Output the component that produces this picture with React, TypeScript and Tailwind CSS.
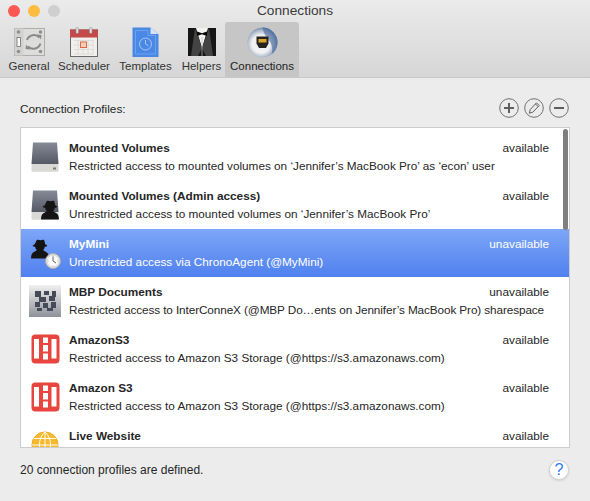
const font = "font-['Liberation_Sans',Arial,sans-serif]";

function GeneralIcon() {
  return (
    <svg width="31" height="28" viewBox="0 0 31 28">
      <rect x="0.500" y="0.500" width="30" height="27" fill="#dddddb" stroke="#adadab" />
      <rect x="0.500" y="0.500" width="9" height="27" fill="#d2d2d0" />
      <circle cx="4.500" cy="4" r="1.800" fill="#8f8f8f" />
      <circle cx="26.500" cy="4" r="1.800" fill="#8f8f8f" />
      <circle cx="4.500" cy="23.500" r="1.800" fill="#8f8f8f" />
      <circle cx="26.500" cy="23.500" r="1.800" fill="#8f8f8f" />
      <rect x="3" y="9.500" width="3.500" height="9" fill="#fbfbfb" stroke="#6f6f6f" strokeWidth="0.800" />
      <path d="M13 12a7.500 7.500 0 0 1 12.500-2.500M26.500 15.500a7.500 7.500 0 0 1-12.500 3" fill="none" stroke="#8a8a8a" strokeWidth="2" />
      <path d="M23 6.500l4.500.5-.5 4.500zM16 21.500l-4.500-.5.500-4.500z" fill="#8a8a8a" />
    </svg>
  );
}

function SchedulerIcon() {
  return (
    <svg width="30" height="30" viewBox="0 0 30 30">
      <rect x="1" y="2.500" width="28" height="27.500" fill="#6a6a6a" />
      <rect x="2" y="3.500" width="26" height="25.500" fill="#f1efec" />
      <rect x="1" y="2.500" width="28" height="8" fill="#c4494b" />
      <rect x="7" y="0.500" width="2.500" height="6" rx="1.200" fill="#e3e3e3" stroke="#8a8a8a" strokeWidth="0.600" />
      <rect x="20.500" y="0.500" width="2.500" height="6" rx="1.200" fill="#e3e3e3" stroke="#8a8a8a" strokeWidth="0.600" />
      <path d="M5 13.500h20M5 18h20M5 22.500h20M5 27h20M9 13v14M14 13v14M19 13v14M24 13v14" stroke="#dbd8d4" strokeWidth="0.800" />
      <rect x="11.500" y="15" width="6" height="5.500" fill="#f3cdbb" stroke="#dc6a48" />
    </svg>
  );
}

function TemplatesIcon() {
  return (
    <svg width="27" height="30" viewBox="0 0 27 30">
      <path d="M0.500 0.500h18l8 6.500v23H0.500z" fill="#4a88e6" />
      <path d="M18.500 0.500l8 6.500h-8z" fill="#d5e3f7" />
      <path d="M3.500 3.500h12.500v5h7.500v18.500H3.500z" fill="none" stroke="#78a8ee" strokeWidth="0.800" />
      <circle cx="13.500" cy="17" r="6" fill="none" stroke="#a6c6f4" />
      <path d="M13.500 13v4l3 1.800" fill="none" stroke="#a6c6f4" />
    </svg>
  );
}

function HelpersIcon() {
  return (
    <svg width="28" height="28" viewBox="0 0 28 28">
      <rect width="28" height="28" fill="#161616" />
      <path d="M8 0L14 20 20 0z" fill="#f2f2f0" />
      <path d="M7 0L3 28h7l4-8zM21 0l4 28h-7l-4-8z" fill="#434343" />
      <path d="M9 3.500l5 1.800 5-1.800v4.500l-5-1.800-5 1.800z" fill="#050505" />
      <path d="M14 9v19" stroke="#bdbdbd" strokeWidth="0.700" />
    </svg>
  );
}

function ConnectionsIcon() {
  return (
    <svg width="31" height="31" viewBox="0 0 31 31">
      <defs>
        <radialGradient id="conn" cx="0.450" cy="0.550" r="0.600">
          <stop offset="0.500" stopColor="#eff1f3" />
          <stop offset="0.780" stopColor="#a3b0c3" />
          <stop offset="1" stopColor="#4a72ad" />
        </radialGradient>
      </defs>
      <circle cx="15.500" cy="15.500" r="15" fill="url(#conn)" />
      <path d="M15.500 0.500a15 15 0 0 1 15 15c0 5-2.500 9-6 12 1.500-5 .5-10-2-13.500s-6-7-7-13.500z" fill="#3e6196" opacity="0.550" />
      <path d="M9.500 9.500h12v7l-2.500 4.500h-7l-2.500-4.500z" fill="#26231d" />
      <rect x="11.500" y="12" width="8" height="3.500" fill="#dca52d" />
    </svg>
  );
}

function Disk() {
  return (
    <svg width="28" height="30" viewBox="0 0 28 30">
      <defs>
        <linearGradient id="disk" x1="0" y1="0" x2="0" y2="1">
          <stop offset="0" stopColor="#868a97" />
          <stop offset="1" stopColor="#555865" />
        </linearGradient>
      </defs>
      <path d="M2 0.500h24L27.500 22H0.500z" fill="url(#disk)" />
      <path d="M0.500 22h27v6.500a1.300 1.300 0 0 1-1.300 1.300H1.800A1.300 1.300 0 0 1 0.500 28.500z" fill="#d8d8d6" />
      <rect x="22" y="25.500" width="3" height="2" fill="#7b7b62" />
    </svg>
  );
}

function Spy() {
  return (
    <svg width="21" height="22" viewBox="0 0 20 20">
      <path
        d="M6.500 1.500c1.200-.8 2.200.2 3.500.2s2.300-1 3.500-.2l1 4 2 1.200c0 .8-1.800 1.300-2.600 1.300 0 1.300-.7 2.500-1.700 3l3.500 2c1.800 1 2.300 3.500 2.300 6H1c0-2.500.5-5 2.300-6l3.500-2c-1-.5-1.700-1.700-1.700-3-.8 0-2.600-.5-2.600-1.300l2-1.200z"
        fill="#141414"
      />
    </svg>
  );
}

function ClockBadge() {
  return (
    <svg width="16" height="16" viewBox="0 0 16 16">
      <circle cx="8" cy="8" r="7.500" fill="#e4e4e4" stroke="#a9a9a9" />
      <circle cx="8" cy="8" r="5.800" fill="#fbfbfb" stroke="#c8c8c8" strokeWidth="0.500" />
      <path d="M8 3.500V8l3 2" fill="none" stroke="#555" strokeWidth="0.900" />
      <path d="M8 2.800v.8M8 12.400v.8M2.800 8h.8M12.400 8h.8" stroke="#888" strokeWidth="0.500" />
    </svg>
  );
}

function AdminMountIcon() {
  return (
    <div className="relative h-[30px] w-[28px]">
      <Disk />
      <div className="absolute bottom-[-1px] right-[-2px]">
        <Spy />
      </div>
    </div>
  );
}

function AgentIcon() {
  return (
    <div className="relative h-[30px] w-[30px]">
      <div className="ml-[-1px]">
        <Spy />
      </div>
      <div className="absolute bottom-[-1px] right-0">
        <ClockBadge />
      </div>
    </div>
  );
}

function InterConnexIcon() {
  const cells = ["M6 6h6v6H6z", "M15 6h5v4h-5z", "M23 6h4v6h-4z", "M10 12h7v5h-7z", "M20 11h6v5h-6z", "M6 17h5v5H6z", "M14 18h5v5h-5z", "M22 17h5v6h-5z", "M8 23h5v3H8z", "M18 23h6v3h-6z"];
  return (
    <svg width="32" height="32" viewBox="0 0 32 32" className="ml-[-2px]">
      <defs>
        <linearGradient id="icx" x1="0" y1="0" x2="0" y2="1">
          <stop offset="0" stopColor="#f0f0f0" />
          <stop offset="1" stopColor="#8f9199" />
        </linearGradient>
      </defs>
      <rect width="32" height="32" fill="url(#icx)" />
      {cells.map((d) => (
        <path key={d} d={d} fill="#454a58" />
      ))}
    </svg>
  );
}

function S3Icon() {
  return (
    <svg width="29" height="30" viewBox="0 0 29 30">
      <rect width="28" height="29" x="0.500" y="0.500" rx="4" fill="#e8453e" />
      <rect x="3" y="5" width="5" height="19.500" fill="#fff" />
      <rect x="20.500" y="5" width="5" height="19.500" fill="#fff" />
      <rect x="12" y="3.500" width="5" height="5.500" fill="#fff" />
      <rect x="12" y="11" width="5" height="6.500" fill="#fff" />
      <rect x="12" y="19.500" width="5" height="6" fill="#fff" />
    </svg>
  );
}

function GlobeIcon() {
  return (
    <svg width="28" height="30" viewBox="0 0 30 30">
      <circle cx="15" cy="15" r="14" fill="#f6b92d" stroke="#e9a821" />
      <path d="M1 15h28M3 8h24M3 22h24M15 1v28M15 1c-8 7-8 21 0 28M15 1c8 7 8 21 0 28" fill="none" stroke="#fff" strokeWidth="1" />
    </svg>
  );
}

const tabs = [
  { label: "General", icon: <GeneralIcon />, width: "w-[52px]" },
  { label: "Scheduler", icon: <SchedulerIcon />, width: "w-[58px]" },
  { label: "Templates", icon: <TemplatesIcon />, width: "w-[65px]" },
  { label: "Helpers", icon: <HelpersIcon />, width: "w-[47px]" },
];

const rows = [
  { name: "Mounted Volumes", desc: "Restricted access to mounted volumes on ‘Jennifer’s MacBook Pro’ as ‘econ’ user", status: "available", icon: <Disk /> },
  { name: "Mounted Volumes (Admin access)", desc: "Unrestricted access to mounted volumes on ‘Jennifer’s MacBook Pro’", status: "available", icon: <AdminMountIcon /> },
  { name: "MyMini", desc: "Unrestricted access via ChronoAgent (@MyMini)", status: "unavailable", icon: <AgentIcon />, selected: true },
  { name: "MBP Documents", desc: "Restricted access to InterConneX (@MBP Do…ents on Jennifer’s MacBook Pro) sharespace", status: "unavailable", icon: <InterConnexIcon />, tight: true },
  { name: "AmazonS3", desc: "Restricted access to Amazon S3 Storage (@https://s3.amazonaws.com)", status: "available", icon: <S3Icon /> },
  { name: "Amazon S3", desc: "Restricted access to Amazon S3 Storage (@https://s3.amazonaws.com)", status: "available", icon: <S3Icon /> },
  { name: "Live Website", desc: "", status: "available", icon: <GlobeIcon /> },
];

export default function App() {
  return (
    <div className={`${font} flex h-[501px] w-[590px] flex-col overflow-hidden bg-[#ececec] text-[#262626]`}>
      {/* Title bar + toolbar */}
      <header className="h-[78px] shrink-0 border-b border-[#c8c8c8] bg-gradient-to-b from-[#ebebeb] to-[#d6d6d6]">
        <div className="relative flex h-[22px] items-center justify-center text-[13.700px] leading-none text-[#3a3a3a]">
          <div className="absolute left-[8px] top-[5px] flex gap-[8px]">
            <span className="size-3 rounded-full bg-[#fc5753]" />
            <span className="size-3 rounded-full bg-[#fdbc40]" />
            <span className="size-3 rounded-full bg-[#cfcfcf]" />
          </div>
          Connections
        </div>
        <nav className="flex h-[55px] pl-[3px]">
          {tabs.map((t) => (
            <div key={t.label} className={`flex ${t.width} flex-col items-center`}>
              <div className="flex h-[36px] items-center justify-center pt-[3px]">{t.icon}</div>
              <span className="mt-[1px] text-[11.500px] leading-[15px] text-[#333]">{t.label}</span>
            </div>
          ))}
          <div className="flex w-[74px] flex-col items-center rounded-t-[3px] bg-[#c6c6c6]">
            <div className="flex h-[36px] items-center justify-center pt-[5px]">
              <ConnectionsIcon />
            </div>
            <span className="mt-[1px] text-[11.500px] leading-[15px] text-[#222]">Connections</span>
          </div>
        </nav>
      </header>

      <main className="flex flex-1 flex-col px-[20px]">
        <div className="flex h-[49px] items-end justify-between pb-[9px]">
          <span className="pb-[1px] text-[11.800px] leading-[15px]">Connection Profiles:</span>
          <div className="mr-[1px] flex gap-[5px] text-[#707070]">
            <svg width="20" height="20" viewBox="0 0 20 20" fill="none" stroke="currentColor">
              <circle cx="10" cy="10" r="9.300" />
              <path d="M5 10h10M10 5v10" strokeWidth="2" stroke="#5f5f5f" />
            </svg>
            <svg width="20" height="20" viewBox="0 0 20 20" fill="none" stroke="currentColor">
              <circle cx="10" cy="10" r="9.300" />
              <path d="M12.500 4.800l2.700 2.700-6.400 6.700-3.400 1 .8-3.600z" fill="#ececec" strokeWidth="1" stroke="#5f5f5f" />
              <path d="M11.500 6l2.700 2.700" strokeWidth="1" stroke="#5f5f5f" />
            </svg>
            <svg width="20" height="20" viewBox="0 0 20 20" fill="none" stroke="currentColor">
              <circle cx="10" cy="10" r="9.300" />
              <path d="M5 10h10" strokeWidth="2" stroke="#5f5f5f" />
            </svg>
          </div>
        </div>

        <section className="relative h-[321px] overflow-hidden border border-[#cccccc] bg-white pt-[5px]">
          {rows.map((r) => (
            <div
              key={r.name}
              className={`flex h-[48px] items-center pl-[10px] pr-[20px] ${r.selected ? "bg-gradient-to-b from-[#7ea6f8] to-[#4f80ee] text-white" : ""}`}
            >
              <div className="flex w-[38px] shrink-0 items-center">{r.icon}</div>
              <div className="min-w-0 flex-1">
                <div className="flex h-[18px] items-center justify-between pt-[1px] text-[11.800px]">
                  <span className="font-bold">{r.name}</span>
                  <span>{r.status}</span>
                </div>
                <div className={`h-[18px] whitespace-nowrap text-[11.750px] leading-[18px] ${r.tight ? "tracking-[-0.1px]" : ""}`}>{r.desc}</div>
              </div>
            </div>
          ))}
          <div className="absolute right-[1px] top-[1px] h-[101px] w-[5px] rounded-full bg-[#7f7f7f]" />
        </section>

        <footer className="flex flex-1 items-center justify-between pb-[9px]">
          <span className="text-[12px] leading-[15px]">20 connection profiles are defined.</span>
          <button className="mr-[1px] flex size-[20px] items-center justify-center rounded-full border border-[#d2d2d2] bg-white text-[16px] leading-none text-[#2f7bf6] shadow-sm">
            ?
          </button>
        </footer>
      </main>
    </div>
  );
}
